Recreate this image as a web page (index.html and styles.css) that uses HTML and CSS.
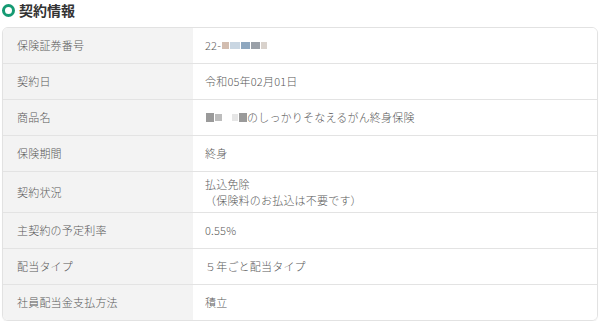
FILE: index.html
```html
<!DOCTYPE html>
<html lang="ja">
<head>
<meta charset="utf-8">
<link rel="stylesheet" href="styles.css">
</head>
<body>
<div class="page">
  <h2 class="title"><span class="ring"></span>契約情報</h2>
  <div class="card">
    <div class="row"><div class="label">保険証券番号</div><div class="value">22-<span class="mosaic"><i class="m1"></i><i class="m2"></i><i class="m3"></i><i class="m4"></i><i class="m5"></i></span></div></div>
    <div class="row"><div class="label">契約日</div><div class="value">令和05年02月01日</div></div>
    <div class="row"><div class="label">商品名</div><div class="value"><span class="mosaic"><i class="m6"></i><i class="m7"></i><i class="gap"></i><i class="m8"></i><i class="m6"></i></span>のしっかりそなえるがん終身保険</div></div>
    <div class="row"><div class="label">保険期間</div><div class="value">終身</div></div>
    <div class="row tall"><div class="label">契約状況</div><div class="value">払込免除<br>（保険料のお払込は不要です）</div></div>
    <div class="row"><div class="label">主契約の予定利率</div><div class="value">0.55%</div></div>
    <div class="row"><div class="label">配当タイプ</div><div class="value">５年ごと配当タイプ</div></div>
    <div class="row last"><div class="label">社員配当金支払方法</div><div class="value">積立</div></div>
  </div>
</div>
</body>
</html>
```
FILE: styles.css
```css
html, body {
  margin: 0;
  padding: 0;
  background: #ffffff;
}
body {
  font-family: "Noto Sans CJK JP", "Noto Sans", sans-serif;
  color: #5a5a5a;
}
.page {
  padding: 0 2px;
}
.title {
  display: flex;
  align-items: center;
  gap: 4px;
  margin: 0;
  height: 20px;
  font-size: 14px;
  font-weight: 700;
  color: #333333;
  line-height: 18px;
  margin-bottom: 7px;
}
.ring {
  width: 7px;
  height: 7px;
  border: 3px solid #159a73;
  border-radius: 50%;
  flex: none;
}
.card {
  border: 1px solid #e2e2e2;
  border-radius: 6px;
  overflow: hidden;
  box-shadow: 0 1px 1px rgba(0,0,0,0.06);
}
.row {
  display: grid;
  grid-template-columns: 190px 1fr;
  border-bottom: 1px solid #e3e3e3;
  font-size: 11px;
  line-height: 15px;
  font-weight: 300;
}
.row.last {
  border-bottom: none;
}
.label {
  background: #f3f3f3;
  padding: 10px 14px;
  display: flex;
  align-items: center;
  letter-spacing: 0.2px;
}
.value {
  background: #ffffff;
  padding: 10px 12px;
  display: flex;
  align-items: center;
  flex-wrap: wrap;
  letter-spacing: 0.2px;
}
.row.tall .value {
  display: block;
  padding: 4px 12px;
  line-height: 16px;
}
.row.tall .label {
  padding: 4px 14px;
}
.mosaic {
  display: inline-flex;
  align-items: center;
  gap: 1px;
  height: 10px;
  margin-left: 1px;
}
.mosaic i {
  display: inline-block;
  height: 7px;
}
.m1 { width: 7px; background: #d2bdb0; }
.m2 { width: 10px; background: #c9d6e2; }
.m3 { width: 9px; background: #8ea7bf; }
.m4 { width: 9px; background: #9aa0a8; }
.m5 { width: 6px; background: #d9d2cc; }
.m6 { width: 8px; height: 9px !important; background: #9a9a9a; }
.m7 { width: 7px; background: #bdbdbd; }
.m8 { width: 6px; background: #e6e6e6; }
.gap { width: 8px; }
```
